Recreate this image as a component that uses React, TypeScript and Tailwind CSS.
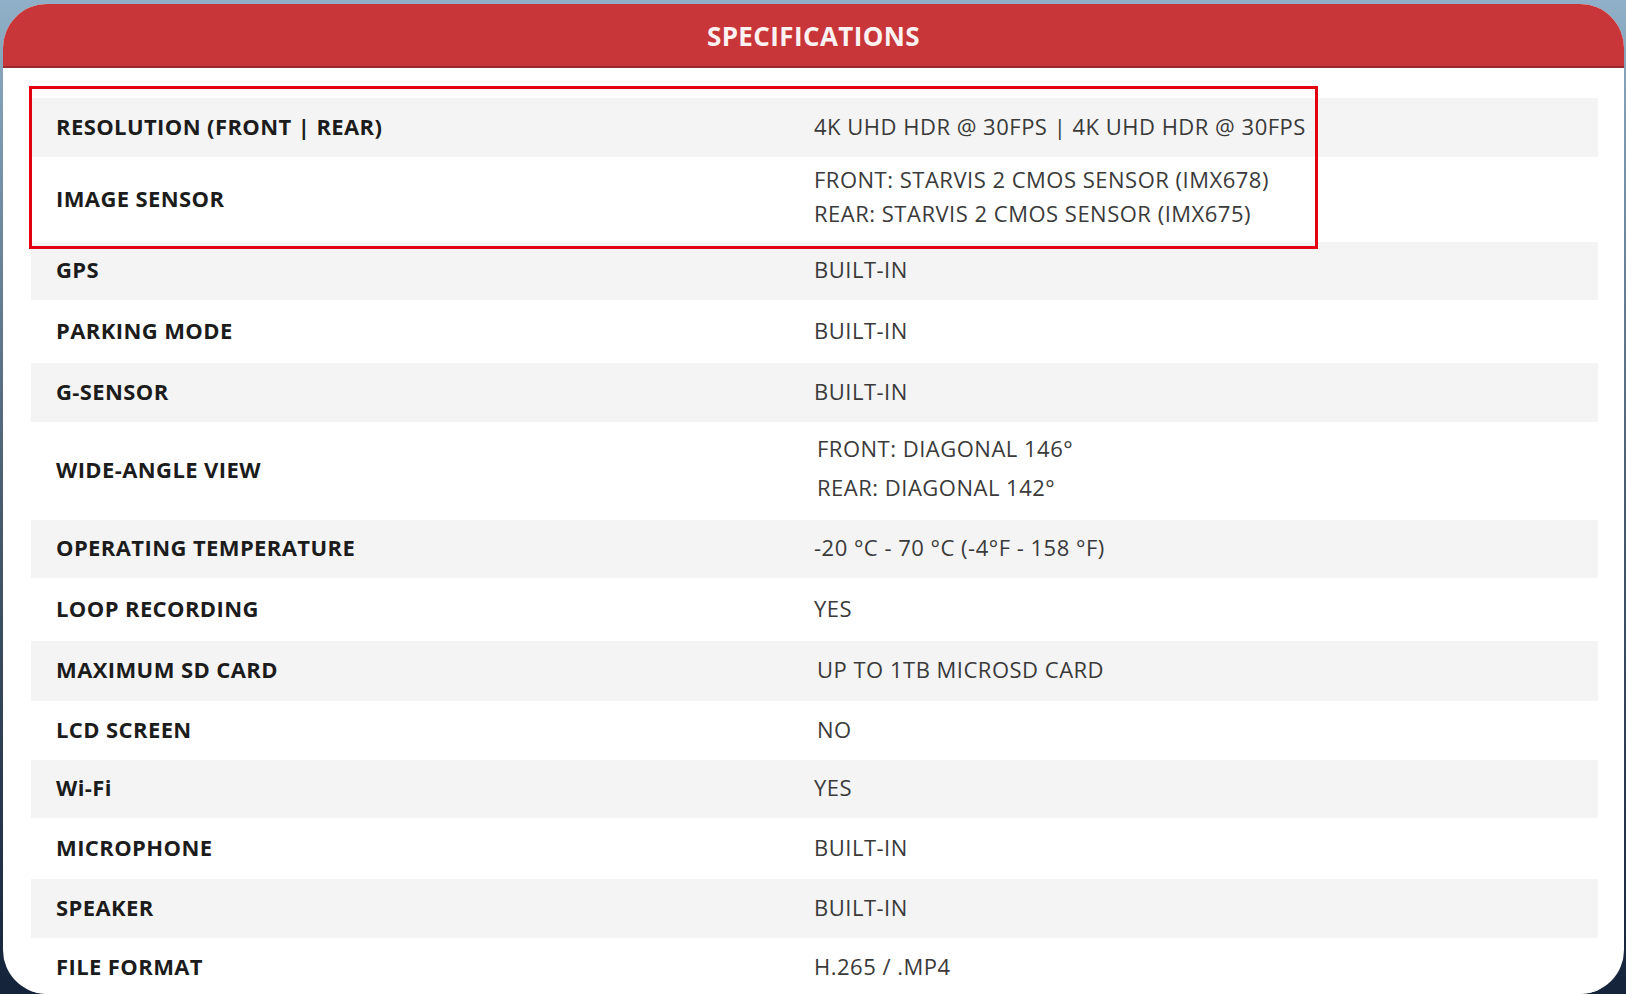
const rows = [
  { label: "RESOLUTION (FRONT | REAR)", value: ["4K UHD HDR @ 30FPS | 4K UHD HDR @ 30FPS"], h: "h-[59px]" },
  { label: "IMAGE SENSOR", value: ["FRONT: STARVIS 2 CMOS SENSOR (IMX678)", "REAR: STARVIS 2 CMOS SENSOR (IMX675)"], h: "h-[85px]", lead: "leading-[34px] -mt-[5px]" },
  { label: "GPS", value: ["BUILT-IN"], h: "h-[58px]" },
  { label: "PARKING MODE", value: ["BUILT-IN"], h: "h-[63px]" },
  { label: "G-SENSOR", value: ["BUILT-IN"], h: "h-[59px]" },
  { label: "WIDE-ANGLE VIEW", value: ["FRONT: DIAGONAL 146°", "REAR: DIAGONAL 142°"], h: "h-[98px]", lead: "leading-[39px] -mt-[4px]", shift: true },
  { label: "OPERATING TEMPERATURE", value: ["-20 °C - 70 °C (-4°F - 158 °F)"], h: "h-[58px]" },
  { label: "LOOP RECORDING", value: ["YES"], h: "h-[63px]" },
  { label: "MAXIMUM SD CARD", value: ["UP TO 1TB MICROSD CARD"], h: "h-[60px]", shift: true },
  { label: "LCD SCREEN", value: ["NO"], h: "h-[59px]", shift: true },
  { label: "Wi-Fi", value: ["YES"], h: "h-[58px]" },
  { label: "MICROPHONE", value: ["BUILT-IN"], h: "h-[61px]" },
  { label: "SPEAKER", value: ["BUILT-IN"], h: "h-[59px]" },
  { label: "FILE FORMAT", value: ["H.265 / .MP4"], h: "h-[59px]" },
];

function SpecRow({ row, i }: { row: (typeof rows)[number]; i: number }) {
  return (
    <div
      className={`grid grid-cols-[758px_1fr] items-center pl-[25px] pb-[3px] ${row.h} ${
        i % 2 === 0 ? "bg-[#f4f4f4]" : "bg-white"
      }`}
    >
      <div className="text-[22px] font-bold text-[#1c1c1c] tracking-[0.4px]">{row.label}</div>
      <div className={`text-[22px] text-[#3a3a3a] tracking-[0.5px] ${row.lead ?? ""} ${row.shift ? "pl-[3px]" : ""}`}>
        {row.value.map((v) => (
          <div key={v}>{v}</div>
        ))}
      </div>
    </div>
  );
}

export default function App() {
  return (
    <div
      className="relative w-[1626px] h-[994px] overflow-hidden bg-gradient-to-b from-[#8fb0c8] via-[#4a5d70] to-[#14233a] pl-[3px] pt-[4px]"
      style={{ fontFamily: '"Open Sans", "Liberation Sans", sans-serif' }}
    >
      <div className="w-[1621px] h-[990px] bg-white rounded-[44px] overflow-hidden">
        <div className="h-[64px] pt-[3px] bg-[#c9363a] border-b-2 border-[#962a2c] flex items-center justify-center">
          <h1 className="text-[26px] font-bold text-[#fdf2f2] tracking-[0.4px]">SPECIFICATIONS</h1>
        </div>
        <div className="mt-[30px] ml-[28px] mr-[26px]">
          {rows.map((r, i) => (
            <SpecRow key={r.label} row={r} i={i} />
          ))}
        </div>
      </div>

      {/* highlight box drawn over the first two rows */}
      <div className="absolute left-[29px] top-[86px] w-[1289px] h-[163px] border-[3px] border-[#e3000f]" />
    </div>
  );
}
